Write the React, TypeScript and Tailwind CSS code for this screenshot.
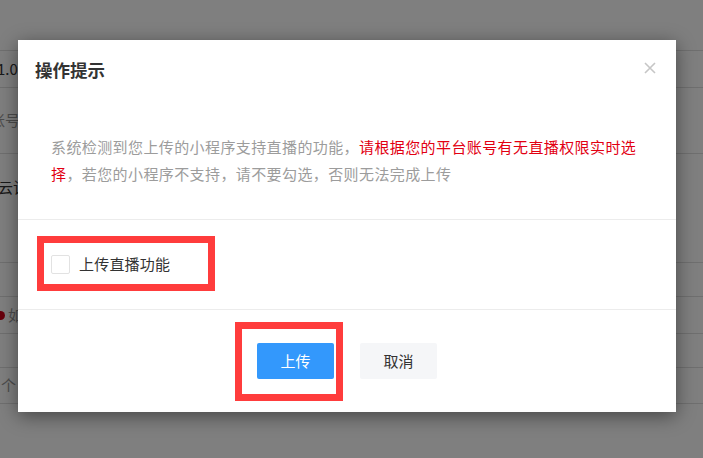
export default function App() {
  return (
    <div className="relative w-[703px] h-[458px] overflow-hidden bg-white font-['Noto_Sans_CJK_SC',sans-serif]">
      {/* page behind the modal */}
      <div className="flex flex-col text-[15px] text-[#333]">
        <div className="h-[51px] border-b border-[#dedede]" />
        <div className="h-[37px] border-b border-[#dedede] flex items-center -ml-[3px]">1.0.1 版本</div>
        <div className="h-[66px] border-b border-[#dedede] flex items-center -ml-[10px] text-[#999]">账号信息</div>
        <div className="h-[109px] border-b border-[#dedede] pt-[22px] -ml-[2px]">云记录</div>
        <div className="h-[34px] border-b border-[#dedede]" />
        <div className="h-[37px] border-b border-[#dedede] flex items-center gap-[3px] -ml-[4px] text-[#999]">
          <span className="w-[9px] h-[9px] rounded-full bg-[#d0021b]" />
          如有问题
        </div>
        <div className="h-[34px] border-b border-[#dedede]" />
        <div className="h-[36px] border-b border-[#dedede] flex items-center pl-[1px] text-[#999]">个</div>
      </div>
      <div className="absolute inset-0 bg-black/50" />

      {/* modal */}
      <div className="absolute left-[18px] top-[40px] w-[658px] h-[372px] bg-white flex flex-col shadow-[0_4px_18px_rgba(0,0,0,0.45)]">
        <div className="relative h-[60px] pl-[17px] pt-[19px]">
          <h2 className="text-[17.5px] leading-[22px] font-bold text-[#333]">操作提示</h2>
          <button className="absolute right-[20px] top-[22px] w-[12px] h-[12px]">
            <svg viewBox="0 0 12 12" className="w-[12px] h-[12px]">
              <path d="M1 1L11 11M11 1L1 11" stroke="#c6c6c6" strokeWidth="1.6" fill="none" />
            </svg>
          </button>
        </div>
        <div className="h-[119px] px-[33px] flex items-center">
          <p className="text-[15px] leading-[27px] tracking-[0.4px] whitespace-nowrap text-[#9c9c9c]">
            系统检测到您上传的小程序支持直播的功能，
            <span className="text-[#e20012]">请根据您的平台账号有无直播权限实时选<br />择</span>
            ，若您的小程序不支持，请不要勾选，否则无法完成上传
          </p>
        </div>
        <div className="h-[91px] border-y border-[#ececec] flex items-center pl-[33px] gap-[9px]">
          <span className="w-[19px] h-[19px] border border-[#e2e2e2] rounded-[2px] bg-white" />
          <span className="text-[15px] tracking-[0.2px] text-[#333]">上传直播功能</span>
        </div>
        <div className="flex-1 flex items-center justify-center gap-[26px]">
          <button className="w-[77px] h-[36px] rounded-[2px] bg-[#3398fc] text-white text-[15px]">上传</button>
          <button className="w-[77px] h-[36px] rounded-[2px] bg-[#f5f6f8] text-[#333] text-[15px]">取消</button>
        </div>
      </div>

      {/* red annotation boxes */}
      <div className="absolute left-[37px] top-[236px] w-[178px] h-[55px] border-[7px] border-[#ff3c3c]" />
      <div className="absolute left-[235px] top-[322px] w-[108px] h-[79px] border-[7px] border-[#ff3c3c]" />
    </div>
  );
}
